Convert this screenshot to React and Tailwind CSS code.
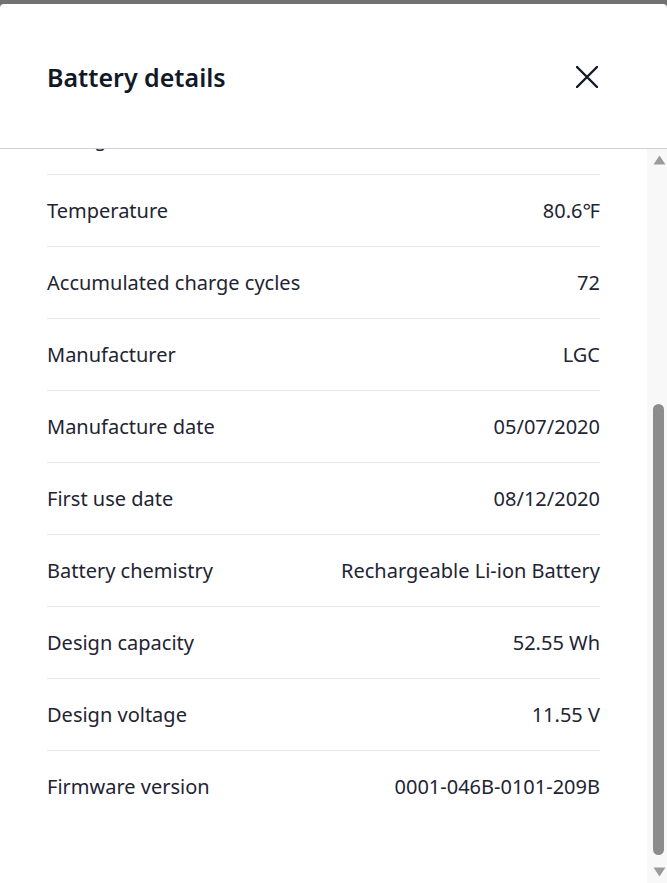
import React, { useEffect, useRef } from "react";

const rows = [
  ["Name", "5B10W13930"],
  ["Serial number", "SP123456789"],
  ["Full charge capacity", "48.21 Wh"],
  ["Remaining capacity", "39.02 Wh"],
  ["Voltage", "12.41 V"],
  ["Temperature", "80.6℉"],
  ["Accumulated charge cycles", "72"],
  ["Manufacturer", "LGC"],
  ["Manufacture date", "05/07/2020"],
  ["First use date", "08/12/2020"],
  ["Battery chemistry", "Rechargeable Li-ion Battery"],
  ["Design capacity", "52.55 Wh"],
  ["Design voltage", "11.55 V"],
  ["Firmware version", "0001-046B-0101-209B"],
];

export default function App() {
  const ref = useRef(null);
  useEffect(() => {
    if (ref.current) ref.current.scrollTop = 387;
  }, []);
  return (
    <div
      className="h-[883px] w-[667px] bg-[#727272] pt-[4px] overflow-hidden"
      style={{ fontFamily: '"Noto Sans", "Open Sans", sans-serif' }}
    >
      <div className="flex h-[879px] flex-col rounded-t-[4px] bg-white">
        <div className="flex h-[145px] shrink-0 items-center justify-between border-b border-[#cdd3dd] pl-[47px] pr-[69px] pt-[2px]">
          <h1 className="text-[25px] font-semibold text-[#111827] leading-none">
            Battery details
          </h1>
          <svg width="22" height="22" viewBox="0 0 22 22">
            <path d="M1 1L21 21M21 1L1 21" stroke="#111827" strokeWidth="2.4" strokeLinecap="round" />
          </svg>
        </div>
        <div className="flex min-h-0 flex-1">
          <div ref={ref} className="min-w-0 flex-1 overflow-hidden">
            <div className="pt-[52px] pb-[80px] px-[47px]">
              {rows.map(([k, v], i) => (
                <div
                  key={k}
                  className={
                    "flex h-[72px] items-center justify-between text-[20px] text-[#1e2433] " +
                    (i > 0 ? "border-t border-[#e5e7eb]" : "")
                  }
                >
                  <span>{k}</span>
                  <span>{v}</span>
                </div>
              ))}
            </div>
          </div>
          <div className="flex w-[20px] shrink-0 flex-col bg-[#f8f8f8]">
            <div className="flex h-[21px] shrink-0 justify-end pr-[1px] pt-[6px]">
              <svg width="13" height="10" viewBox="0 0 13 10">
                <path d="M6.5 0.5L12.5 9.5H0.5Z" fill="#9b9b9b" />
              </svg>
            </div>
            <div className="flex-1 flex justify-end pr-[3px]">
              <div className="mt-[234px] h-[451px] w-[11px] rounded-full bg-[#8c8c8c]" />
            </div>
            <div className="flex h-[20px] shrink-0 justify-end pr-[1px] pt-[4px]">
              <svg width="13" height="10" viewBox="0 0 13 10">
                <path d="M0.5 0.5H12.5L6.5 9.5Z" fill="#9b9b9b" />
              </svg>
            </div>
          </div>
        </div>
      </div>
    </div>
  );
}
